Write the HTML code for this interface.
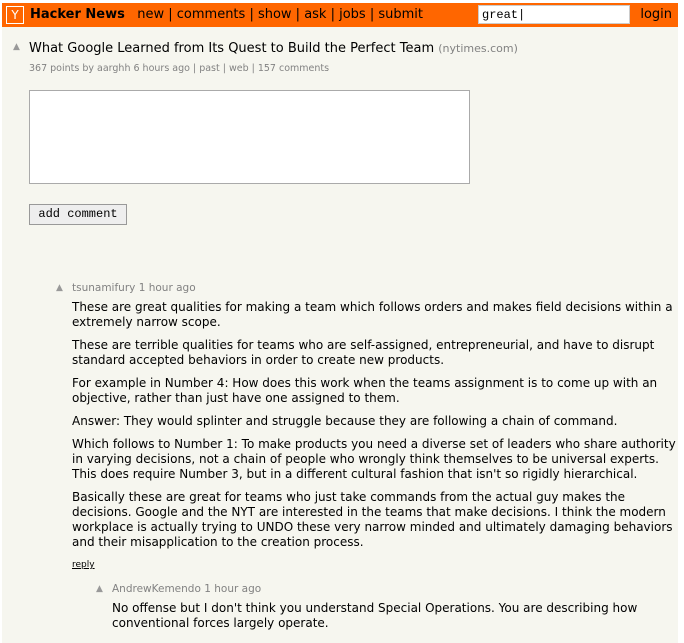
<!DOCTYPE html><html><head><style>
body{margin:0;background:#fff;font-family:"DejaVu Sans",Verdana,sans-serif;}
#wrap{position:absolute;left:2px;top:3px;width:676px;height:640px;background:#f6f6ef;}
#bar{height:24px;background:#ff6600;position:relative;font-size:13px;line-height:24px;color:#000;}
#logo{position:absolute;left:4px;top:3px;width:16px;height:16px;border:1px solid #fff;color:#fff;font-size:12px;line-height:16px;text-align:center;}
#bar .t{position:absolute;left:28px;top:0;white-space:nowrap;}
#search{position:absolute;left:476px;top:2px;width:152px;height:19px;background:#fff;border:1px solid #ccc;font-family:"Liberation Mono",monospace;font-size:12px;line-height:19px;padding-left:3px;box-sizing:border-box;}
#login{position:absolute;right:6px;top:0;}
.abs{position:absolute;white-space:nowrap;}
.arr{color:#999;font-size:9px;}
.sub{font-size:9.5px;color:#828282;}
.c{position:absolute;left:70px;font-size:12px;line-height:15px;color:#000;width:606px;}
.c p{margin:0 0 8px 0;}
</style></head><body><div id="wrap">
<div id="bar"><div id="logo">Y</div><div class="t"><b>Hacker News</b>&nbsp;&nbsp; new | comments | show | ask | jobs | submit</div><div id="search">great|</div><div id="login">login</div></div>
<div class="abs arr" style="left:11px;top:39px">▲</div>
<div class="abs" style="left:27px;top:38px;font-size:13px">What Google Learned from Its Quest to Build the Perfect Team <span style="font-size:11px;color:#828282">(nytimes.com)</span></div>
<div class="abs sub" style="left:27px;top:60px">367 points by aarghh 6 hours ago | past | web | 157 comments</div>
<div class="abs" style="left:27px;top:87px;width:439px;height:92px;background:#fff;border:1px solid #aaa"></div>
<div class="abs" style="left:27px;top:201px;height:19px;width:96px;border:1px solid #999;background:#eee;font-family:'Liberation Mono',monospace;font-size:12px;line-height:19px;text-align:center">add comment</div>
<div class="abs arr" style="left:54px;top:280px">▲</div>
<div class="abs" style="left:70px;top:279px;font-size:10.5px;color:#828282">tsunamifury 1 hour ago</div>
<div class="c" style="top:297px">
<p>These are great qualities for making a team which follows orders and makes field decisions within a extremely narrow scope.</p>
<p>These are terrible qualities for teams who are self-assigned, entrepreneurial, and have to disrupt standard accepted behaviors in order to create new products.</p>
<p>For example in Number 4: How does this work when the teams assignment is to come up with an objective, rather than just have one assigned to them.</p>
<p>Answer: They would splinter and struggle because they are following a chain of command.</p>
<p>Which follows to Number 1: To make products you need a diverse set of leaders who share authority in varying decisions, not a chain of people who wrongly think themselves to be universal experts. This does require Number 3, but in a different cultural fashion that isn't so rigidly hierarchical.</p>
<p>Basically these are great for teams who just take commands from the actual guy makes the decisions. Google and the NYT are interested in the teams that make decisions. I think the modern workplace is actually trying to UNDO these very narrow minded and ultimately damaging behaviors and their misapplication to the creation process.</p>
<p style="font-size:9px;text-decoration:underline">reply</p>
</div>
<div class="abs arr" style="left:94px;top:581px">▲</div>
<div class="abs" style="left:110px;top:580px;font-size:10.5px;color:#828282">AndrewKemendo 1 hour ago</div>
<div class="c" style="top:598px;left:110px;width:560px"><p>No offense but I don't think you understand Special Operations. You are describing how conventional forces largely operate.</p></div>
</div></body></html>
